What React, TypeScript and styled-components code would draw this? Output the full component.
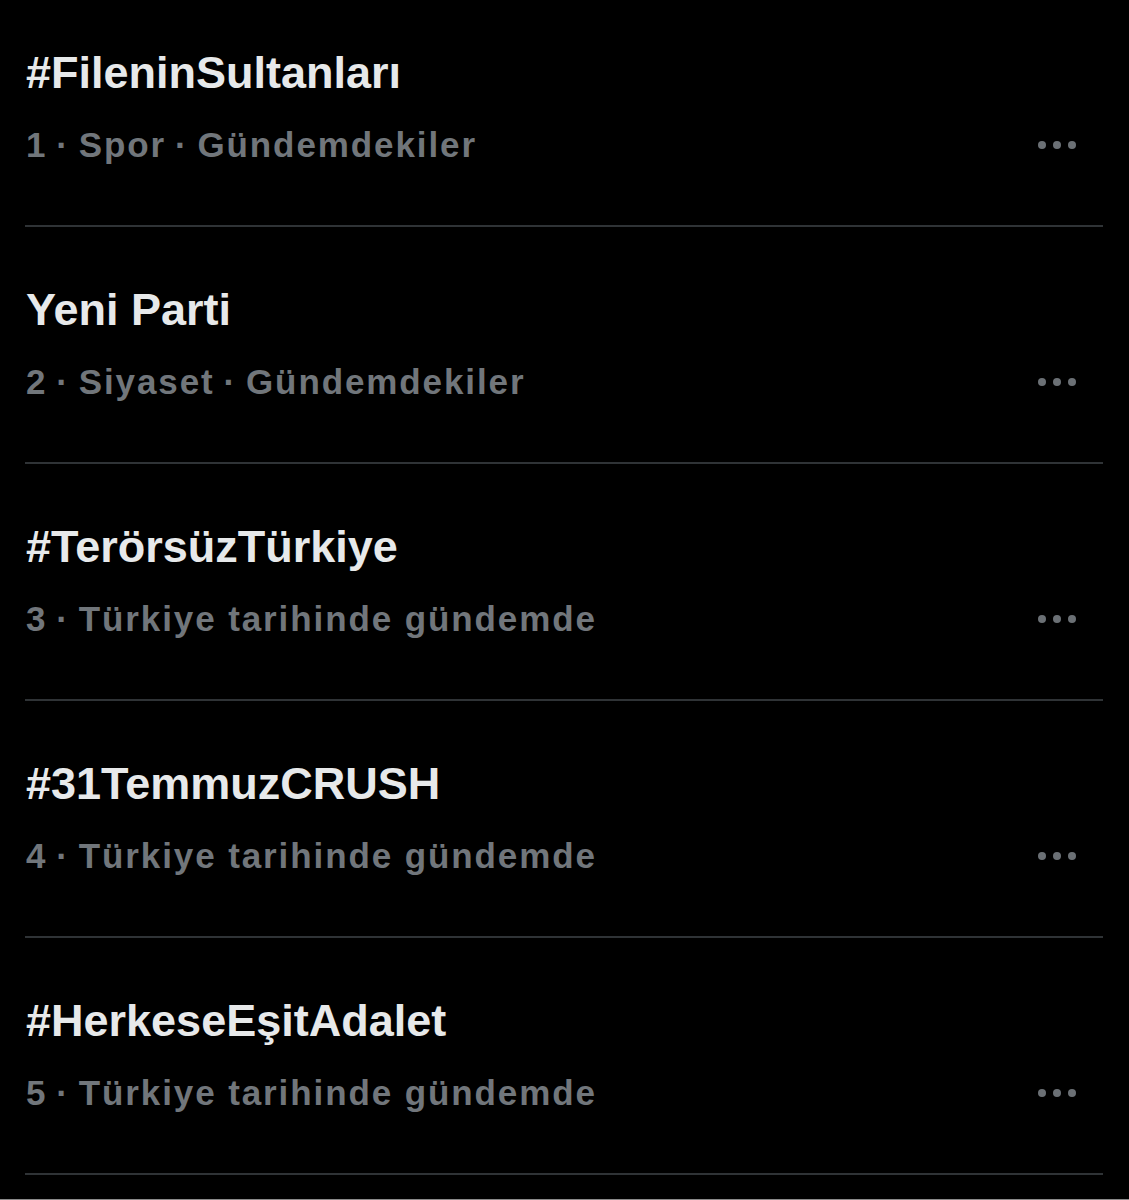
import styled, { createGlobalStyle } from 'styled-components'

interface TrendType {
  title: string
  meta: string[]
}

const trends: TrendType[] = [
  { title: '#FileninSultanları', meta: ['1', 'Spor', 'Gündemdekiler'] },
  { title: 'Yeni Parti', meta: ['2', 'Siyaset', 'Gündemdekiler'] },
  { title: '#TerörsüzTürkiye', meta: ['3', 'Türkiye tarihinde gündemde'] },
  { title: '#31TemmuzCRUSH', meta: ['4', 'Türkiye tarihinde gündemde'] },
  { title: '#HerkeseEşitAdalet', meta: ['5', 'Türkiye tarihinde gündemde'] },
]

const GlobalStyle = createGlobalStyle`
  html, body {
    margin: 0;
    padding: 0;
    background: #000;
  }
  body {
    font-family: "Liberation Sans", Arial, sans-serif;
  }
`

const StyledPage = styled.div`
  width: 1129px;
  height: 1200px;
  background: #000;
  display: flex;
  flex-direction: column;
  overflow: hidden;
`

const StyledTrendList = styled.div`
  flex: 1;
  display: flex;
  flex-direction: column;
  padding: 0 26px 0 25px;
`

const StyledTrendItem = styled.div`
  display: flex;
  flex-direction: column;
  padding: 57px 0 58px 1px;
  border-bottom: 2px solid #2f3336;
  &:first-child {
    padding-top: 47px;
  }
  .trendTitle {
    margin: 0;
    font-size: 45px;
    line-height: 52px;
    font-weight: bold;
    color: #e7e9ea;
  }
  .trendMetaRow {
    display: flex;
    align-items: center;
    justify-content: space-between;
    margin-top: 24px;
  }
  .trendMeta {
    margin: 0;
    font-size: 35px;
    line-height: 44px;
    font-weight: bold;
    color: #71767b;
    letter-spacing: 1.9px;
    white-space: pre;
  }
`

const StyledMoreButton = styled.div`
  display: flex;
  gap: 7px;
  margin-right: 27px;
  span {
    width: 8px;
    height: 8px;
    border-radius: 50%;
    background: #6b7075;
  }
`

const StyledBottomEdge = styled.div`
  height: 1px;
  background: #8a8a8a;
`

export default function App() {
  return (
    <>
      <GlobalStyle />
      <StyledPage>
        <StyledTrendList>
          {trends.map((trend) => (
            <TrendItem key={trend.title} {...trend} />
          ))}
        </StyledTrendList>
        <StyledBottomEdge />
      </StyledPage>
    </>
  )
}

function TrendItem({ title, meta }: TrendType) {
  return (
    <StyledTrendItem>
      <p className="trendTitle">{title}</p>
      <div className="trendMetaRow">
        <p className="trendMeta">{meta.join('\u2009·\u2009')}</p>
        <StyledMoreButton>
          <span />
          <span />
          <span />
        </StyledMoreButton>
      </div>
    </StyledTrendItem>
  )
}
